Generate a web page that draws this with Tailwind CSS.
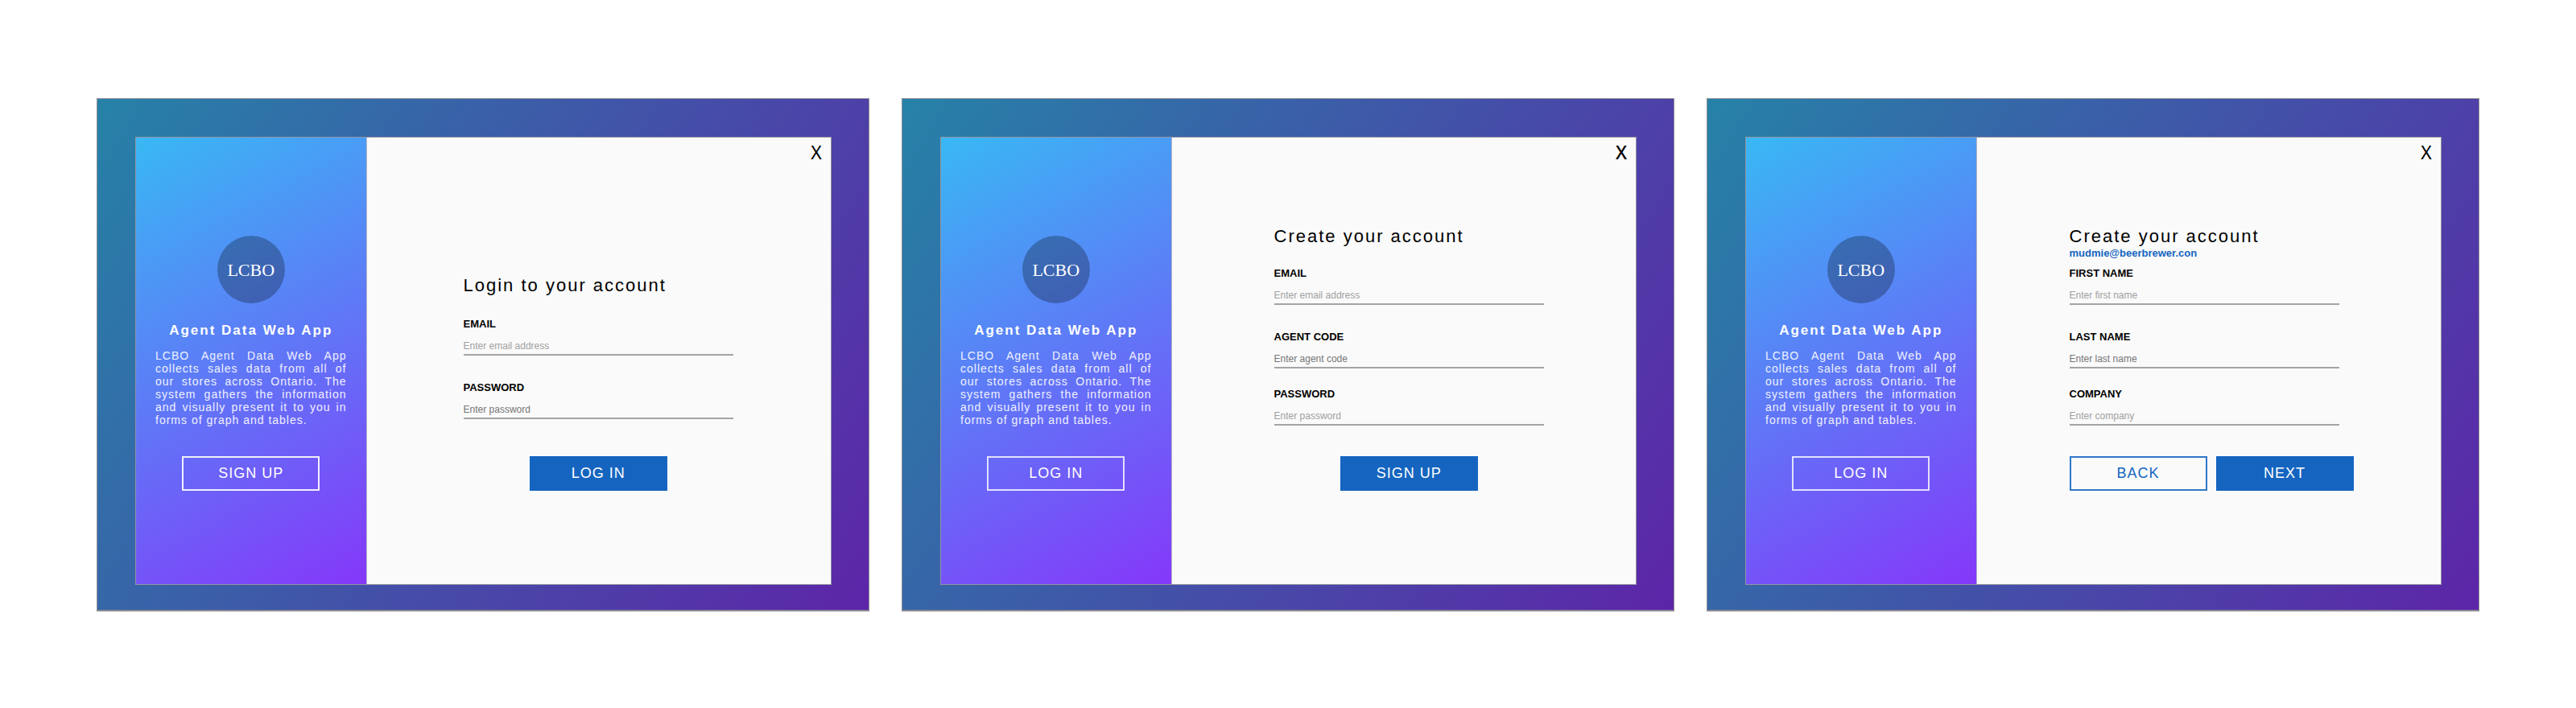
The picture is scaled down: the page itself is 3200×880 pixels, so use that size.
<!DOCTYPE html>
<html lang="en">
<head>
<meta charset="utf-8">
<meta name="viewport" content="width=device-width, initial-scale=1">
<title>Agent Data Web App</title>
<script src="https://cdn.jsdelivr.net/npm/@tailwindcss/browser@4"></script>
</head>
<body class="bg-white font-['Liberation_Sans',Arial,sans-serif] text-black">
<div class="flex flex-wrap items-start gap-10 px-[120px] py-[122px]">

  <!-- Log in -->
  <section class="min-w-[800px] flex-1 border border-b-2 border-[#8e8e94] bg-[linear-gradient(122deg,#2682a8,#5d25a8)] pt-[47px] pr-[46px] pb-[31px] pl-[47px]">
    <div class="relative flex border border-[#9393a0] bg-[#fafafa]">
      <aside class="flex w-[33.2%] flex-col items-center border-r border-[#b4b4c4] bg-[linear-gradient(152deg,#39b8f4,#8538f9)] px-6 pt-[122px] pb-[116px] text-white">
        <div class="flex size-[84px] items-center justify-center rounded-full bg-black/27 font-['Liberation_Serif',serif] text-[22px]">LCBO</div>
        <h2 class="mt-6 text-[17px] leading-5 font-bold tracking-[2px]">Agent Data Web App</h2>
        <p class="mt-[13px] text-justify text-[14px] leading-4 tracking-[1px] text-white/90">LCBO Agent Data Web App collects sales data from all of our stores across Ontario. The system gathers the information and visually present it to you in forms of graph and tables.</p>
        <button type="button" class="mt-[37px] h-[43px] w-[171px] border-2 border-white/90 text-[18px] tracking-[1px]">SIGN UP</button>
      </aside>
      <form class="flex flex-1 flex-col pt-[171px] pr-[121px] pl-[120px]">
        <h1 class="text-[22px] leading-[26px] tracking-[2px]">Login to your account</h1>
        <label for="login-email" class="mt-[27px] text-[13px] leading-4 font-bold">EMAIL</label>
        <input id="login-email" type="email" placeholder="Enter email address" class="mt-2 h-[23px] w-full border-b-2 border-[#a4a4a4] text-[12px] outline-none placeholder:text-[#a0a0a0]">
        <label for="login-password" class="mt-8 text-[13px] leading-4 font-bold">PASSWORD</label>
        <input id="login-password" type="password" placeholder="Enter password" class="mt-2 h-[23px] w-full border-b-2 border-[#a4a4a4] text-[12px] outline-none placeholder:text-[#757575]">
        <button type="submit" class="mt-[46px] h-[43px] w-[171px] self-center bg-[#1565c0] text-[18px] tracking-[1px] text-white">LOG IN</button>
      </form>
      <button type="button" aria-label="Close" class="absolute top-1.5 right-1.5 size-6 font-['Noto_Sans',sans-serif] text-[23px] leading-6">X</button>
    </div>
  </section>

  <!-- Sign up, step one -->
  <section class="min-w-[800px] flex-1 border border-b-2 border-[#8e8e94] bg-[linear-gradient(122deg,#2682a8,#5d25a8)] pt-[47px] pr-[46px] pb-[31px] pl-[47px]">
    <div class="relative flex border border-[#9393a0] bg-[#fafafa]">
      <aside class="flex w-[33.2%] flex-col items-center border-r border-[#b4b4c4] bg-[linear-gradient(152deg,#39b8f4,#8538f9)] px-6 pt-[122px] pb-[116px] text-white">
        <div class="flex size-[84px] items-center justify-center rounded-full bg-black/27 font-['Liberation_Serif',serif] text-[22px]">LCBO</div>
        <h2 class="mt-6 text-[17px] leading-5 font-bold tracking-[2px]">Agent Data Web App</h2>
        <p class="mt-[13px] text-justify text-[14px] leading-4 tracking-[1px] text-white/90">LCBO Agent Data Web App collects sales data from all of our stores across Ontario. The system gathers the information and visually present it to you in forms of graph and tables.</p>
        <button type="button" class="mt-[37px] h-[43px] w-[171px] border-2 border-white/80 text-[18px] tracking-[1px]">LOG IN</button>
      </aside>
      <form class="flex flex-1 flex-col pt-[110px] pr-[114px] pl-[127px]">
        <h1 class="text-[22px] leading-[26px] tracking-[2px]">Create your account</h1>
        <label for="signup-email" class="mt-[25px] text-[13px] leading-4 font-bold">EMAIL</label>
        <input id="signup-email" type="email" placeholder="Enter email address" class="mt-2 h-[23px] w-full border-b-2 border-[#a4a4a4] text-[12px] outline-none placeholder:text-[#a0a0a0]">
        <label for="signup-code" class="mt-8 text-[13px] leading-4 font-bold">AGENT CODE</label>
        <input id="signup-code" type="text" placeholder="Enter agent code" class="mt-2 h-[23px] w-full border-b-2 border-[#a4a4a4] text-[12px] outline-none placeholder:text-[#757575]">
        <label for="signup-password" class="mt-6 text-[13px] leading-4 font-bold">PASSWORD</label>
        <input id="signup-password" type="password" placeholder="Enter password" class="mt-2 h-[23px] w-full border-b-2 border-[#a4a4a4] text-[12px] outline-none placeholder:text-[#a0a0a0]">
        <button type="submit" class="mt-[38px] h-[43px] w-[171px] self-center bg-[#1565c0] text-[18px] tracking-[1px] text-white">SIGN UP</button>
      </form>
      <button type="button" aria-label="Close" class="absolute top-1.5 right-1.5 size-6 font-['Noto_Sans',sans-serif] text-[23px] leading-6 font-medium">X</button>
    </div>
  </section>

  <!-- Sign up, step two -->
  <section class="min-w-[800px] flex-1 border border-b-2 border-[#8e8e94] bg-[linear-gradient(122deg,#2682a8,#5d25a8)] pt-[47px] pr-[46px] pb-[31px] pl-[47px]">
    <div class="relative flex border border-[#9393a0] bg-[#fafafa]">
      <aside class="flex w-[33.2%] flex-col items-center border-r border-[#b4b4c4] bg-[linear-gradient(152deg,#39b8f4,#8538f9)] px-6 pt-[122px] pb-[116px] text-white">
        <div class="flex size-[84px] items-center justify-center rounded-full bg-black/27 font-['Liberation_Serif',serif] text-[22px]">LCBO</div>
        <h2 class="mt-6 text-[17px] leading-5 font-bold tracking-[2px]">Agent Data Web App</h2>
        <p class="mt-[13px] text-justify text-[14px] leading-4 tracking-[1px] text-white/90">LCBO Agent Data Web App collects sales data from all of our stores across Ontario. The system gathers the information and visually present it to you in forms of graph and tables.</p>
        <button type="button" class="mt-[37px] h-[43px] w-[171px] border-2 border-white/80 text-[18px] tracking-[1px]">LOG IN</button>
      </aside>
      <form class="flex flex-1 flex-col pt-[110px] pr-[126px] pl-[115px]">
        <h1 class="text-[22px] leading-[26px] tracking-[2px]">Create your account</h1>
        <a href="#" class="self-start text-[13px] leading-4 font-bold text-[#1565c0]">mudmie@beerbrewer.con</a>
        <label for="first-name" class="mt-[9px] text-[13px] leading-4 font-bold">FIRST NAME</label>
        <input id="first-name" type="text" placeholder="Enter first name" class="mt-2 h-[23px] w-full border-b-2 border-[#a4a4a4] text-[12px] outline-none placeholder:text-[#a0a0a0]">
        <label for="last-name" class="mt-8 text-[13px] leading-4 font-bold">LAST NAME</label>
        <input id="last-name" type="text" placeholder="Enter last name" class="mt-2 h-[23px] w-full border-b-2 border-[#a4a4a4] text-[12px] outline-none placeholder:text-[#757575]">
        <label for="company" class="mt-6 text-[13px] leading-4 font-bold">COMPANY</label>
        <input id="company" type="text" placeholder="Enter company" class="mt-2 h-[23px] w-full border-b-2 border-[#a4a4a4] text-[12px] outline-none placeholder:text-[#a0a0a0]">
        <div class="mt-[38px] -mr-5 flex gap-[11px]">
          <button type="button" class="h-[43px] w-[171px] shrink-0 border-2 border-[#2f77c8] text-[18px] tracking-[1px] text-[#1565c0]">BACK</button>
          <button type="submit" class="h-[43px] w-[171px] shrink-0 bg-[#1565c0] text-[18px] tracking-[1px] text-white">NEXT</button>
        </div>
      </form>
      <button type="button" aria-label="Close" class="absolute top-1.5 right-1.5 size-6 font-['Noto_Sans',sans-serif] text-[23px] leading-6">X</button>
    </div>
  </section>

</div>
</body>
</html>
